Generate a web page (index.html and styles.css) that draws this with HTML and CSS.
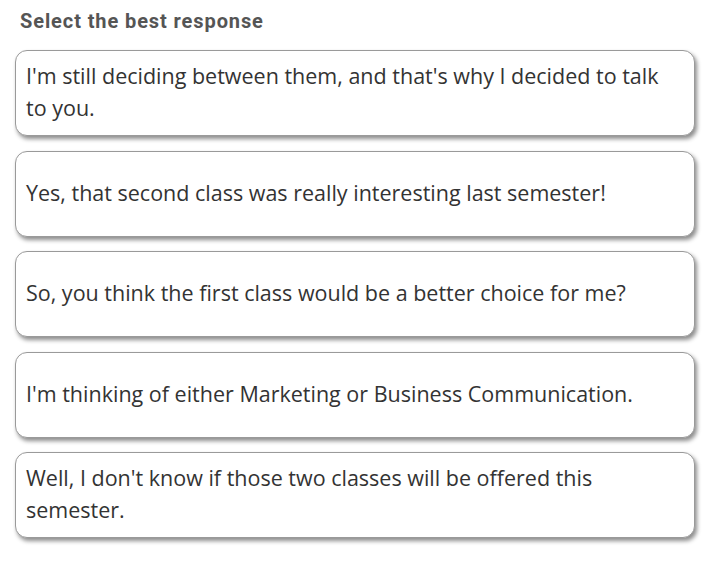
FILE: index.html
```html
<!DOCTYPE html>
<html>
<head>
<meta charset="utf-8">
<link rel="stylesheet" href="styles.css">
</head>
<body>
<div class="page">
  <h1 class="title">Select the best response</h1>
  <div class="options">
    <div class="option">I'm still deciding between them, and that's why I decided to talk to you.</div>
    <div class="option">Yes, that second class was really interesting last semester!</div>
    <div class="option">So, you think the first class would be a better choice for me?</div>
    <div class="option">I'm thinking of either Marketing or Business Communication.</div>
    <div class="option">Well, I don't know if those two classes will be offered this semester.</div>
  </div>
</div>
</body>
</html>
```
FILE: styles.css
```css
html, body {
  margin: 0;
  padding: 0;
  background: #ffffff;
}
.page {
  padding: 9px 26px 20px 15px;
  width: 680px;
}
.title {
  margin: 0 0 0 5px;
  font-family: Roboto, "Liberation Sans", sans-serif;
  font-weight: 700;
  font-size: 20px;
  letter-spacing: 0.9px;
  line-height: 24px;
  color: #555555;
}
.options {
  margin-top: 17px;
  display: flex;
  flex-direction: column;
  gap: 14.5px;
}
.option {
  box-sizing: border-box;
  min-height: 86px;
  display: flex;
  align-items: center;
  padding: 0 20px 2px 10px;
  border: 1px solid #9a9a9a;
  border-radius: 12px;
  background: #ffffff;
  box-shadow: 2px 3px 4px rgba(0, 0, 0, 0.45);
  font-family: "Open Sans", "Noto Sans", sans-serif;
  font-size: 21.5px;
  line-height: 32px;
  color: #333333;
}
```
